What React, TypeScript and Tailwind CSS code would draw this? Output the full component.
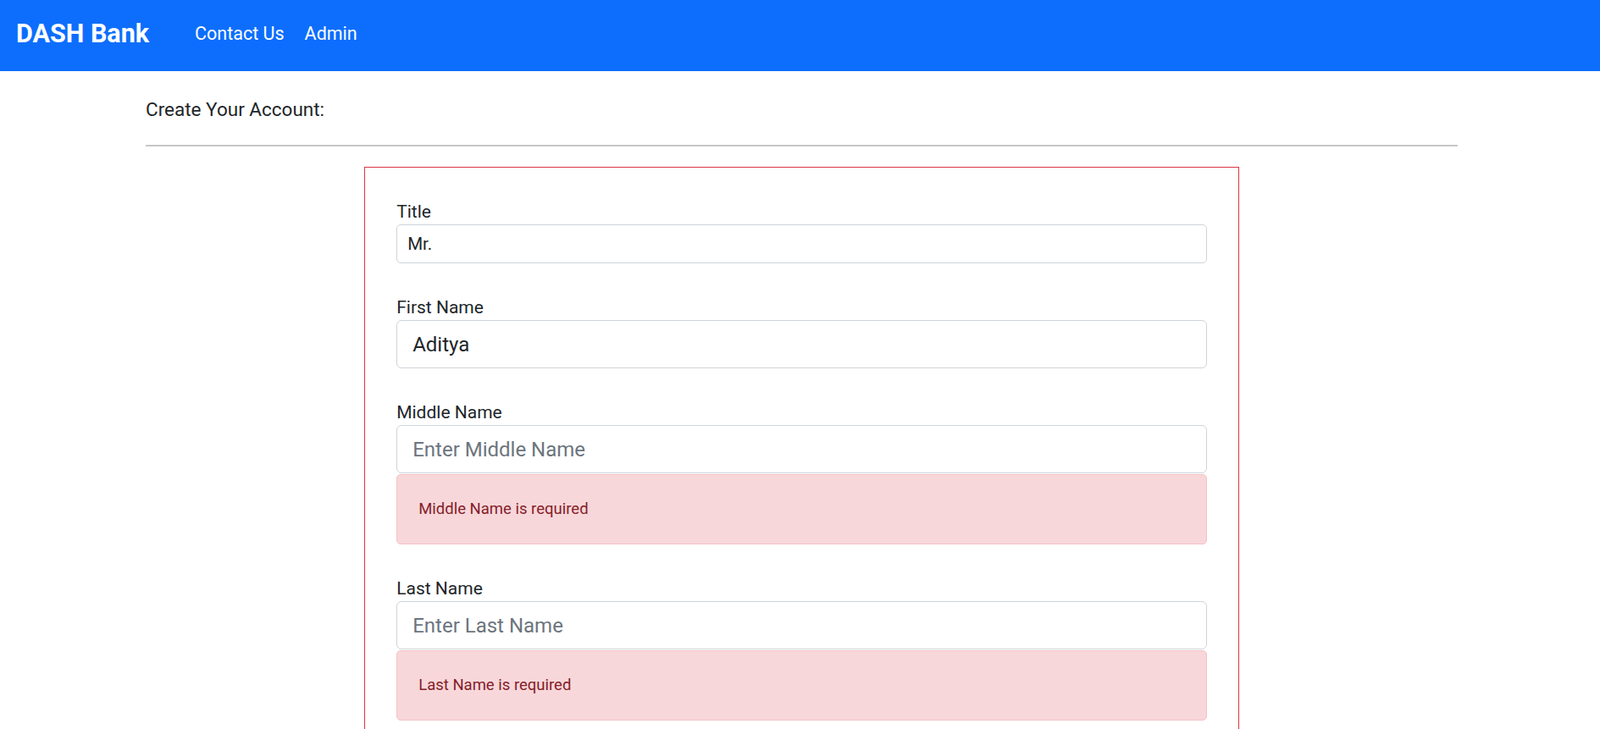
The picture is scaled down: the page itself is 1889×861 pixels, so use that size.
import React from "react";

function Field({
  label,
  value,
  placeholder,
  error,
  small,
}: {
  label: string;
  value?: string;
  placeholder?: string;
  error?: string;
  small?: boolean;
}) {
  return (
    <div className="mb-[37px]">
      <label className="block text-[21px] leading-[30px] text-[#212529]">{label}</label>
      <input
        readOnly
        value={value ?? ""}
        placeholder={placeholder}
        className={
          small
            ? "block w-full h-[46px] px-[12px] text-[20.5px] text-[#212529] bg-white border border-[#ced4da] rounded-[5px] outline-none"
            : "block w-full h-[57px] px-[18px] text-[24px] text-[#212529] bg-white border border-[#ced4da] rounded-[6px] outline-none placeholder:text-[#6c757d]"
        }
      />
      {error && (
        <div className="mt-[1px] h-[83px] flex items-center px-[25px] text-[18.5px] text-[#842029] bg-[#f8d7da] border border-[#f5c2c7] rounded-[5px]">
          {error}
        </div>
      )}
    </div>
  );
}

export default function App() {
  return (
    <div className="min-h-screen bg-white font-['Roboto','Liberation_Sans',sans-serif]">
      <nav className="h-[84px] bg-[#0d6efd] flex items-center pl-[19px] pb-[4px] text-white">
        <span className="text-[30.5px] font-bold">DASH Bank</span>
        <a className="ml-[54px] text-[21.5px]">Contact Us</a>
        <a className="ml-[24px] text-[21.5px]">Admin</a>
      </nav>

      <main className="pl-[172px] pr-[168px]">
        <h5 className="pt-[30px] text-[22.5px] leading-[30px] text-[#212529]">Create Your Account:</h5>
        <hr className="mt-[27px] border-t-2 border-[#c7c7c7]" />

        <div className="mt-[24px] mx-auto w-2/3 border border-[#dc3545] px-[37px] pt-[37px]">
          <Field label="Title" value="Mr." small />
          <Field label="First Name" value="Aditya" />
          <Field label="Middle Name" placeholder="Enter Middle Name" error="Middle Name is required" />
          <Field label="Last Name" placeholder="Enter Last Name" error="Last Name is required" />
        </div>
      </main>
    </div>
  );
}
